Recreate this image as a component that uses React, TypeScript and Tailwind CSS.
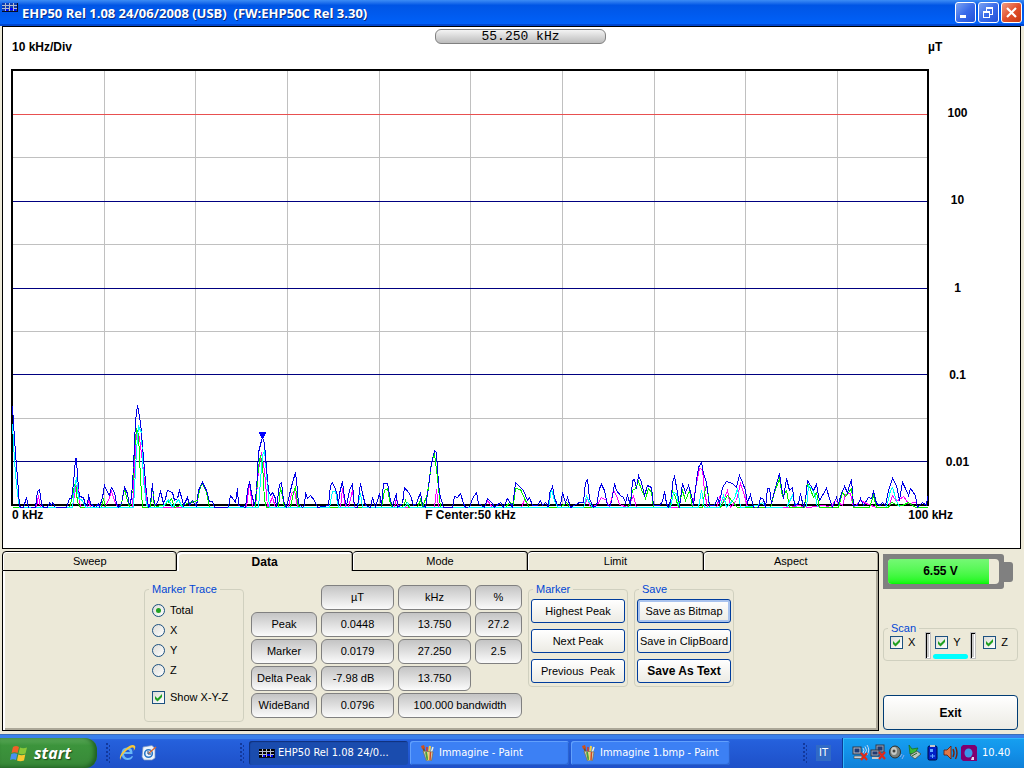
import { useState, type ReactNode } from "react";

const TOTAL =
  "12,406 13,423 15,453 17,478 19,505 20,507 23,507 26,497 28,507 35,507 37,491 39,489 41,503 43,507 47,507 49,502 51,505 52,502 55,507 66,507 69,498 71,498 73,483 75,458 76,458 77,477 79,496 83,497 85,505 87,505 88,494 90,503 95,507 98,503 99,507 102,497 104,485 107,492 109,495 111,487 114,492 116,503 118,507 121,503 124,487 127,493 129,505 131,497 133,467 135,420 137,405 140,422 143,457 146,493 148,507 150,503 152,483 153,498 155,505 157,502 160,491 163,503 165,498 167,490 172,492 174,500 177,498 179,490 182,500 183,505 187,497 189,505 192,500 196,506 198,490 202,482 206,490 209,501 212,501 214,507 228,507 230,495 233,499 235,502 237,488 238,505 245,507 247,490 249,481 251,493 254,505 256,490 258,452 261,440 262,437 264,443 266,468 268,490 270,495 272,492 275,498 276,507 279,484 281,482 283,500 286,507 290,490 292,482 295,472 296,480 298,503 302,507 304,505 305,492 307,498 310,495 314,500 317,507 328,505 330,485 332,482 335,489 337,495 338,505 339,493 342,481 344,498 346,505 349,490 352,483 354,507 357,507 360,483 362,493 365,505 370,507 372,497 375,507 379,493 381,505 383,483 387,483 390,500 392,505 396,493 397,507 402,503 404,487 408,492 410,495 413,505 416,503 420,492 422,505 425,507 428,487 431,463 434,450 436,452 437,470 439,493 443,507 452,507 454,496 457,497 460,493 463,503 465,507 469,507 472,498 476,492 478,503 484,507 487,498 492,503 494,507 500,502 503,507 507,498 510,503 512,507 515,482 520,487 523,490 527,500 529,497 532,505 537,505 540,500 542,505 545,502 548,507 549,493 552,486 554,497 557,505 560,505 562,492 565,502 567,497 570,507 579,502 583,502 585,482 587,479 589,498 593,507 596,505 599,488 601,484 604,490 607,505 610,505 613,490 614,483 616,490 620,495 623,497 625,502 627,495 630,505 632,480 634,479 636,488 638,475 641,482 644,495 647,485 651,487 653,505 659,505 662,501 664,491 666,503 668,507 671,497 672,482 674,476 677,492 679,507 682,483 685,492 688,485 691,495 693,505 696,480 698,467 701,462 703,473 706,482 709,505 714,505 717,498 719,502 722,487 726,481 732,483 736,487 739,475 742,482 745,490 747,502 750,494 753,507 758,507 760,497 763,499 765,507 767,488 769,488 771,503 775,487 779,473 781,487 783,498 786,478 789,490 792,487 794,505 798,503 800,493 803,507 805,500 807,480 810,485 813,490 816,484 819,500 822,495 826,488 829,498 832,507 836,497 838,503 841,493 844,486 847,492 849,485 851,479 853,505 857,505 860,498 863,505 868,497 871,498 873,491 876,503 880,505 882,502 885,505 888,490 892,478 896,485 899,500 902,482 905,488 908,495 910,488 915,495 917,507 922,502 926,505 927,496";

const GREEN =
  "12,507 69,507 71,500 73,490 75,481 77,502 80,507 101,507 103,498 105,507 120,507 124,489 127,500 129,507 132,490 134,450 136,428 138,434 140,478 142,507 150,507 152,486 154,507 167,503 171,498 174,507 197,500 200,486 202,483 206,492 209,507 255,507 258,466 260,455 262,463 264,500 266,507 278,507 280,487 282,495 284,507 290,507 293,492 295,486 297,503 299,507 381,507 384,490 387,488 390,504 392,507 402,507 405,500 408,507 417,507 420,499 422,507 427,493 431,462 434,453 437,478 440,507 505,507 509,502 513,504 515,488 520,489 525,500 529,507 560,507 566,502 569,507 628,507 632,490 635,488 638,481 641,489 645,498 648,488 651,492 653,507 669,507 672,490 675,497 678,507 682,490 685,500 689,490 692,507 702,507 705,487 707,487 709,507 720,507 727,495 732,501 737,507 770,507 774,492 779,478 782,496 786,490 789,507 804,507 807,482 810,489 813,497 816,492 819,507 838,507 842,492 845,496 851,488 853,507 869,507 873,495 876,507 888,507 891,502 898,505 902,505 908,502 915,507 927,507";

const MAGENTA =
  "12,507 36,507 38,495 40,507 72,507 75,488 77,484 80,507 87,507 88,499 90,507 104,507 108,500 111,491 114,500 117,507 132,507 136,430 139,437 142,462 145,490 147,507 246,507 249,483 252,507 255,507 258,470 261,452 264,470 267,507 272,497 275,507 288,507 291,493 294,490 297,507 340,507 342,488 345,507 348,507 352,490 354,507 394,507 396,497 398,507 434,507 436,489 438,507 484,507 487,500 492,507 521,507 524,499 529,507 583,507 587,498 590,507 597,504 601,497 606,500 609,507 613,490 616,495 619,504 627,507 633,496 636,507 692,507 695,488 699,468 702,469 704,491 707,507 716,507 719,497 722,503 727,490 730,507 736,500 740,483 744,495 747,507 790,507 798,505 808,507 824,505 830,507 835,500 842,505 845,494 850,493 853,507 860,500 868,504 876,507 888,507 892,495 896,501 903,496 908,503 915,502 918,507";

const CYAN =
  "12,424 14,460 16,485 19,507 72,507 74,488 76,477 78,498 82,500 85,507 133,507 136,450 138,426 141,432 143,480 146,505 150,507 162,507 168,499 172,507 178,499 182,507 258,507 260,480 262,455 264,450 267,485 269,507 329,507 332,491 335,491 338,507 357,507 360,493 362,507 404,507 407,502 410,507 548,507 551,489 554,500 557,507 583,507 586,496 589,502 592,507 670,507 673,492 676,493 679,507 698,507 701,490 704,507 719,507 723,495 726,507 734,498 737,488 740,507 757,505 762,502 766,507 782,507";

const CYAN_TAIL = [
  "786,507 792,495 796,507",
  "806,507 808,485 812,489 815,496 817,507",
  "886,507 890,490 892,487 896,500 899,507",
];

const X_GRID = [104, 195, 287, 379, 470, 562, 654, 745, 837];
const DECADES = ["100", "10", "1", "0.1", "0.01"];

function Spectrum() {
  return (
    <svg
      viewBox="11 69 918 439"
      preserveAspectRatio="none"
      className="h-[439px] w-full"
      shapeRendering="crispEdges"
      fill="none"
      role="img"
      aria-label="Spectrum"
    >
      <g stroke="#c0c0c0">
        {X_GRID.map((x) => (
          <line key={x} x1={x + 0.5} x2={x + 0.5} y1="70" y2="505" />
        ))}
        {[157, 244, 331, 418].map((y) => (
          <line key={y} x1="12" x2="928" y1={y + 0.5} y2={y + 0.5} />
        ))}
      </g>
      <line x1="12" x2="928" y1="114.5" y2="114.5" stroke="#e85050" />
      {[201, 288, 374, 461].map((y) => (
        <line key={y} x1="12" x2="928" y1={y + 0.5} y2={y + 0.5} stroke="#000080" />
      ))}
      <rect x="12" y="70" width="916" height="435" stroke="#000" strokeWidth="2" />
      <g transform="translate(0.5 0.5)">
        <polyline points={TOTAL} stroke="#0000e6" />
        <polyline points={MAGENTA} stroke="#ff00ff" />
        <polyline points={GREEN} stroke="#00f000" />
        <polyline points={CYAN} stroke="#00ffff" />
        {CYAN_TAIL.map((points) => (
          <polyline key={points} points={points} stroke="#00ffff" />
        ))}
        <polyline points={TOTAL} stroke="#0000e6" strokeDasharray="14 2" />
      </g>
      <path d="M259 432h7v2h-1v2h-1v2h-3v-2h-1v-2h-1z" fill="#0000ff" />
    </svg>
  );
}

function AppIcon({ plate }: { plate: string }) {
  return (
    <svg viewBox="0 0 16 9" className="h-[9px] w-4 shrink-0" shapeRendering="crispEdges" aria-hidden="true">
      <rect width="16" height="9" fill={plate} />
      <path d="M0 8.5h16M15.500 0v9" stroke="#060c24" />
      <path d="M0 2.5h15M0 5.5h15M3.500 0v8M7.500 0v8M11.500 0v8" stroke="#b4bccc" />
      <path d="M4 8V6h2v2zM8 7V5h3v2zM12 8V6h2v2z" fill="#0000ff" />
    </svg>
  );
}

const CHROME = "grid size-[21px] place-items-center rounded-[3px] border border-white";
const BLUE_BTN = "bg-linear-to-br from-[#7da2f0] via-[#3a6bea] to-[#2150d8]";

function TitleBar() {
  return (
    <header className="flex h-[26px] items-start bg-linear-to-b from-[#3c8cf5] via-[#0055e5] via-20% to-[#0062fb] pr-0.5 shadow-[inset_0_-2px_0_#0046cf]">
      <div className="pt-[3px] pl-0.5">
        <AppIcon plate="#0c3cb0" />
      </div>
      <h1 className="flex-1 pl-1 font-['Open_Sans','Noto_Sans',sans-serif] text-[13px] leading-[26px] font-bold whitespace-pre text-white [text-shadow:1px_1px_0_#0a2a80]">
        EHP50 Rel 1.08 24/06/2008 (USB)  (FW:EHP50C Rel 3.30)
      </h1>
      <div className="flex gap-0.5 pt-0.5">
        <button aria-label="Minimize" className={`${CHROME} ${BLUE_BTN}`}>
          <svg viewBox="0 0 19 19" className="size-[19px]" aria-hidden="true">
            <path d="M4 12h6v3H4z" fill="#fff" />
          </svg>
        </button>
        <button aria-label="Restore" className={`${CHROME} ${BLUE_BTN}`}>
          <svg viewBox="0 0 19 19" className="size-[19px]" shapeRendering="crispEdges" aria-hidden="true">
            <path d="M4.5 8.500h6v6h-6zM4 9.500h7M7.500 8V5.500h6v6H11M7 4.500h7" fill="none" stroke="#fff" />
          </svg>
        </button>
        <button
          aria-label="Close"
          className={`${CHROME} bg-linear-to-br from-[#f09a80] via-[#e2502c] to-[#c8380f]`}
        >
          <svg viewBox="0 0 19 19" className="size-[19px]" aria-hidden="true">
            <path d="M5 5l9 9M14 5l-9 9" stroke="#fff" strokeWidth="2.2" />
          </svg>
        </button>
      </div>
    </header>
  );
}

function ChartPanel() {
  return (
    <main className="mr-[3px] ml-0.5 border border-black bg-white pb-[26px] text-xs font-bold">
      <div className="grid h-[42px] grid-cols-[1fr_171px_414px] items-start pl-[9px]">
        <span className="mt-3 leading-4">10 kHz/Div</span>
        <output className="mt-0.5 h-[15px] rounded-[6px] border border-[#808080] bg-linear-to-b from-[#f4f4f4] to-[#bcbcbc] text-center font-['Liberation_Mono',monospace] text-[13px] leading-[14px] font-normal">
          55.250 kHz
        </output>
        <span className="mt-3 ml-auto w-[92px] leading-4">µT</span>
      </div>
      <div className="flex pl-2">
        <div className="min-w-0 flex-1">
          <Spectrum />
          <div className="grid grid-cols-[1fr_auto_1fr] pl-px leading-[14px]">
            <span>0 kHz</span>
            <span>F Center:50 kHz</span>
            <span className="-mr-6 text-right">100 kHz</span>
          </div>
        </div>
        <div className="flex h-[437px] w-[91px] flex-col pr-[34px]">
          {DECADES.map((d) => (
            <span key={d} className="grid flex-1 place-items-center">
              {d}
            </span>
          ))}
        </div>
      </div>
    </main>
  );
}

function Group({ title, className, children }: { title: string; className: string; children: ReactNode }) {
  return (
    <fieldset className={`rounded-[4px] border border-[#d0d0bf] ${className}`}>
      <legend className="ml-1 px-[3px] leading-3 text-[#0046d5]">{title}</legend>
      {children}
    </fieldset>
  );
}

function Check({ label }: { label: string }) {
  return (
    <label className="flex items-center gap-[5px] leading-4">
      <span className="grid size-[13px]">
        <input
          type="checkbox"
          defaultChecked
          className="peer col-start-1 row-start-1 size-[13px] appearance-none border border-[#1c5180] bg-linear-to-br from-[#dcdcd7] to-white"
        />
        <svg
          viewBox="0 0 13 13"
          className="pointer-events-none invisible col-start-1 row-start-1 size-[13px] peer-checked:visible"
          aria-hidden="true"
        >
          <path d="M3 5v3l2.500 2.500L10 6V3L5.500 7.500z" fill="#21a121" />
        </svg>
      </span>
      {label}
    </label>
  );
}

function Radio({ label, checked, onPick }: { label: string; checked: boolean; onPick: () => void }) {
  return (
    <label className="flex h-5 items-center gap-[5px]">
      <span className="grid size-[13px] place-items-center">
        <input
          type="radio"
          name="trace"
          checked={checked}
          onChange={onPick}
          className="peer col-start-1 row-start-1 size-[13px] appearance-none rounded-full border border-[#1c5180] bg-linear-to-br from-[#dcdcd7] to-white"
        />
        <span className="pointer-events-none invisible col-start-1 row-start-1 size-[5px] rounded-full bg-[#21a121] peer-checked:visible" />
      </span>
      {label}
    </label>
  );
}

const PUSH =
  "h-6 rounded-[3px] border border-[#003c9c] bg-linear-to-b from-white to-[#ecebe4] text-center whitespace-pre";
const CELL =
  "h-[25px] rounded-[6px] border border-[#808080] bg-linear-to-b from-[#c4c4c4] to-[#fbfbfb] p-0 text-center font-normal";

function DataTable() {
  return (
    <table className="mt-0.5 table-fixed border-separate border-spacing-x-1 border-spacing-y-0.5">
      <thead>
        <tr>
          <td className="w-[66px]" />
          <th className={`${CELL} w-[73px]`}>µT</th>
          <th className={`${CELL} w-[73px]`}>kHz</th>
          <th className={`${CELL} w-[47px]`}>%</th>
        </tr>
      </thead>
      <tbody>
        <tr>
          <th className={CELL}>Peak</th>
          <td className={CELL}>0.0448</td>
          <td className={CELL}>13.750</td>
          <td className={CELL}>27.2</td>
        </tr>
        <tr>
          <th className={CELL}>Marker</th>
          <td className={CELL}>0.0179</td>
          <td className={CELL}>27.250</td>
          <td className={CELL}>2.5</td>
        </tr>
        <tr>
          <th className={CELL}>Delta Peak</th>
          <td className={`${CELL} pr-2`}>-7.98 dB</td>
          <td className={CELL}>13.750</td>
        </tr>
        <tr>
          <th className={CELL}>WideBand</th>
          <td className={CELL}>0.0796</td>
          <td className={CELL} colSpan={2}>
            100.000 bandwidth
          </td>
        </tr>
      </tbody>
    </table>
  );
}

const TABS = ["Sweep", "Data", "Mode", "Limit", "Aspect"];

function ControlPanel() {
  const [tab, setTab] = useState("Data");
  const [trace, setTrace] = useState("Total");
  return (
    <section className="flex min-w-0 flex-1 flex-col">
      <div role="tablist" className="grid h-5 grid-cols-5">
        {TABS.map((t) => (
          <button
            key={t}
            role="tab"
            aria-selected={t === tab}
            onClick={() => setTab(t)}
            className={
              t === tab
                ? "rounded-t-[4px] border-t border-r border-black text-xs font-bold shadow-[inset_2px_2px_0_#fff,inset_-1px_0_0_#aca899]"
                : "rounded-t-[4px] border-t border-r border-b border-black shadow-[inset_1px_1px_0_#fff,inset_-1px_0_0_#aca899] first:border-l"
            }
          >
            {t}
          </button>
        ))}
      </div>
      <div className="flex flex-1 items-start border-r border-b border-l border-black pt-3 pl-[141px] shadow-[inset_2px_0_0_#fff,inset_-2px_-2px_0_#aca899]">
        <Group title="Marker Trace" className="h-[139px] w-[100px]">
          <div className="pt-[5px] pl-[7px]">
            {["Total", "X", "Y", "Z"].map((t) => (
              <Radio key={t} label={t} checked={trace === t} onPick={() => setTrace(t)} />
            ))}
            <div className="pt-[9px]">
              <Check label="Show X-Y-Z" />
            </div>
          </div>
        </Group>
        <div className="-mt-0.5 pr-0.5 pl-[3px]">
          <DataTable />
        </div>
        <Group title="Marker" className="w-[100px] pb-[3px]">
          <div className="flex flex-col gap-1.5 px-0.5 pt-1">
            <button className={PUSH}>Highest Peak</button>
            <button className={PUSH}>Next Peak</button>
            <button className={PUSH}>{"Previous  Peak"}</button>
          </div>
        </Group>
        <Group title="Save" className="ml-1.5 w-[100px] pb-[3px]">
          <div className="flex flex-col gap-1.5 px-0.5 pt-1">
            <button className={`${PUSH} shadow-[inset_0_0_0_2px_#a9c3ee]`}>Save as Bitmap</button>
            <button className={PUSH}>Save in ClipBoard</button>
            <button className={`${PUSH} text-xs font-bold`}>Save As Text</button>
          </div>
        </Group>
      </div>
    </section>
  );
}

function Slot() {
  return <span className="h-[27px] w-1.5 border border-[#c0c0c0] bg-[#c8c8c8] shadow-[inset_1px_1px_0_#000,inset_-1px_-1px_0_#fff]" />;
}

function SidePanel() {
  return (
    <aside className="flex w-[145px] flex-col pr-1.5 pl-1">
      <div className="mt-[3px] flex items-center">
        <div className="h-[35px] w-[121px] rounded-r-[3px] bg-[#808080] p-[5px]">
          <div className="h-[25px] overflow-hidden rounded-[4px] bg-[#ece9d8]">
            <div className="h-full w-[101px] bg-linear-to-b from-[#74f874] to-[#00f800] pl-1 text-center text-xs leading-[25px] font-bold">
              6.55 V
            </div>
          </div>
        </div>
        <div className="h-5 w-[9px] rounded-r-[3px] bg-[#808080]" />
      </div>
      <Group title="Scan" className="mt-[33px] h-[39px]">
        <div className="flex items-start pl-1.5">
          <Check label="X" />
          <span className="w-2.5" />
          <div className="-mt-0.5 flex gap-0.5">
            <Slot />
            <div className="flex w-[35px] flex-col justify-between">
              <div className="pt-0.5 pl-0.5">
                <Check label="Y" />
              </div>
              <span className="h-[5px] rounded-full bg-[#00ffff]" />
            </div>
            <Slot />
          </div>
          <span className="w-[7px]" />
          <Check label="Z" />
        </div>
      </Group>
      <button className="mt-auto mb-px h-[35px] rounded-[4px] border border-[#003c74] bg-linear-to-b from-white to-[#ecebe4] text-xs font-bold">
        Exit
      </button>
    </aside>
  );
}

function Grip() {
  return (
    <svg viewBox="0 0 6 22" className="h-[22px] w-1.5" shapeRendering="crispEdges" aria-hidden="true">
      {[1, 5, 9, 13, 17].map((y) => (
        <path key={y} d={`M1 ${y}h2v2H1zM4 ${y + 2}h1v2H4z`} fill="#12389c" />
      ))}
    </svg>
  );
}

function PaintIcon() {
  return (
    <svg viewBox="0 0 16 16" className="size-4 shrink-0" aria-hidden="true">
      <path d="M5 8L3 2" stroke="#8b4a18" strokeWidth="2" />
      <path d="M1 1l3-1 1 3-3 1z" fill="#d05018" />
      <path d="M7 8V2" stroke="#e03020" strokeWidth="1.500" />
      <path d="M9 8l1-7" stroke="#f4d040" strokeWidth="2" />
      <path d="M11 8l2-6" stroke="#f0f0e0" strokeWidth="1.500" />
      <path d="M3 6l10 1-1.500 8.500-5 .5z" fill="#d8d0b0" stroke="#786848" strokeWidth=".7" />
      <path d="M6 7l1.500 8" stroke="#48a038" strokeWidth="1.800" />
      <path d="M8.500 7v8" stroke="#f0d868" strokeWidth="1.200" />
      <path d="M10.500 7l-.5 8" stroke="#d04820" strokeWidth="1.500" />
    </svg>
  );
}

const TASK = "flex h-6 w-[159px] items-center rounded-[3px]";

function TrayIcons() {
  return (
    <svg viewBox="0 0 126 18" className="h-[18px] w-[126px] shrink-0" aria-hidden="true">
      <g>
        <rect x="1" y="3" width="8" height="7" fill="#b8bcc8" stroke="#303848" />
        <rect x="2.500" y="4.500" width="5" height="4" fill="#203a70" />
        <path d="M2 12h8v2.500H2z" fill="#d0d0d0" stroke="#404040" strokeWidth=".6" />
        <path d="M11 4q2 2 0 5M13 2.500q3 3.500 0 7.500M15 1q3.500 5 0 10" fill="none" stroke="#c8d8f0" />
        <path d="M9 9l6 7M15 9l-6 7" stroke="#e02818" strokeWidth="2.200" />
      </g>
      <g>
        <rect x="24" y="1" width="8" height="7" fill="#9aa4b8" stroke="#303848" />
        <rect x="25.500" y="2.500" width="5" height="4" fill="#203a70" />
        <rect x="19" y="6" width="8" height="6" fill="#9aa4b8" stroke="#303848" />
        <rect x="20.500" y="7.500" width="5" height="3" fill="#203a70" />
        <path d="M20 13h7v2h-7z" fill="#c8c8c8" />
        <path d="M27 8l6 7M33 8l-6 7" stroke="#e02818" strokeWidth="2.200" />
      </g>
      <g>
        <ellipse cx="43" cy="8" rx="5.500" ry="6" fill="#78807c" stroke="#303430" />
        <ellipse cx="42" cy="7" rx="3" ry="4" fill="#c4c8c4" />
        <circle cx="42" cy="7" r="1.500" fill="#404440" />
        <path d="M48 13l2-3M50 15l2-4" stroke="#88b0f0" />
      </g>
      <g>
        <path d="M57 1l3 4 6-1-3 5-5 1z" fill="#38b838" stroke="#186818" strokeWidth=".7" />
        <path d="M58 11l7-4 4 3-6 5z" fill="#c0c8c0" stroke="#384838" strokeWidth=".7" />
        <path d="M60 12l5-3" stroke="#286028" />
      </g>
      <g>
        <rect x="76" y="2" width="9" height="14" rx="1.500" fill="#0020c8" stroke="#000840" />
        <path d="M78 1h5v2h-5z" fill="#c8c8c8" />
        <rect x="78" y="5" width="3" height="3" fill="#60a8ff" />
        <path d="M78 12h5M80.500 10v4" stroke="#60a8ff" />
      </g>
      <g stroke="#601808" strokeWidth=".8">
        <path d="M92 6h3l4-4v13l-4-4h-3z" fill="#e07848" />
        <path d="M101 5q2 4 0 8M103.500 3q3 6 0 12" fill="none" stroke="#782008" strokeWidth="1.400" />
      </g>
      <g>
        <path d="M111 1h12l2 2v14h-14l-2-2V3z" fill="#800070" />
        <ellipse cx="116.500" cy="9" rx="4" ry="4.500" fill="#3a98e8" />
        <path d="M120 13h2v3h-3z" fill="#e8d8f0" />
      </g>
    </svg>
  );
}

function TaskBar() {
  return (
    <footer className="flex h-[34px] items-end bg-linear-to-b from-[#3a7be8] via-[#2560dc] via-20% to-[#1e50c8] font-['DejaVu_Sans_Condensed','DejaVu_Sans',sans-serif] text-[11px] text-white shadow-[inset_0_1px_0_#3a6eb8,inset_0_5px_0_#3a80ea]">
      <button className="flex h-[30px] w-[97px] items-center gap-1.5 rounded-r-xl bg-linear-to-b from-[#5aa858] via-[#3c943c] via-25% to-[#388838] pl-2.5 shadow-[inset_-3px_-1px_4px_#1f5f22]">
        <svg viewBox="0 0 18 17" className="h-[17px] w-[18px]" aria-hidden="true">
          <path d="M3 2q3-2 6 0L7.500 8q-3-1.500-6 0z" fill="#f06028" />
          <path d="M10 2.500q3 1.500 7 0L15.500 8.500q-3 1.500-7 0z" fill="#88c838" />
          <path d="M1.300 9q3-1.500 6 0L6 15q-3-1.500-6 0z" fill="#4890f0" />
          <path d="M8.300 9.500q3 1.500 7 0L14 15.500q-4 1.500-7 0z" fill="#f8c830" />
        </svg>
        <span className="font-['Open_Sans','Noto_Sans',sans-serif] text-base leading-5 font-bold italic [text-shadow:1px_1px_1px_#1c4a1c]">
          start
        </span>
      </button>
      <div className="flex h-[30px] items-center pl-2">
        <Grip />
        <svg viewBox="0 0 40 18" className="ml-2 h-[18px] w-10" aria-hidden="true">
          <path d="M13.500 10H5q.5 4 4 4 2.500 0 4-2l1 .5q-1.500 3.500-5.500 3.500Q2.500 16 2.500 9.500T9 3.500q5 0 4.500 6.500M5 8h6q-.5-2.500-3-2.500T5 8" fill="#68b8f8" fillRule="evenodd" />
          <path d="M1.500 16Q-1 12 6 5.500T16 2q1 2-1.500 5Q15.500 4 14 3.500 11 3 6 8T1.500 16" fill="#f8c838" />
          <path d="M24 3l9-1.500 3 3V14l-3 2h-8l-2-3z" fill="#eef4fc" stroke="#8098c0" strokeWidth=".7" />
          <circle cx="29.500" cy="9.500" r="3.800" fill="none" stroke="#2878c8" strokeWidth="1.600" />
          <path d="M30 9l7-6" stroke="#d86830" strokeWidth="1.500" />
          <path d="M29 7v3h3" fill="none" stroke="#183868" />
        </svg>
      </div>
      <div className="flex h-[30px] flex-1 items-center gap-0.5 pl-20">
        <Grip />
        <button className={`${TASK} ml-0.5 gap-[3px] bg-[#1a4cae] pl-2.5 shadow-[inset_1px_1px_1px_#10307c]`}>
          <AppIcon plate="#000000" />
          EHP50 Rel 1.08 24/0...
        </button>
        <button className={`${TASK} gap-[3px] bg-[#3c80f4] pl-2.5 shadow-[inset_1px_1px_0_#62a0fc,inset_-1px_-1px_1px_#2860cc]`}>
          <PaintIcon />
          Immagine - Paint
        </button>
        <button className={`${TASK} gap-[3px] bg-[#3c80f4] pl-2.5 shadow-[inset_1px_1px_0_#62a0fc,inset_-1px_-1px_1px_#2860cc]`}>
          <PaintIcon />
          Immagine 1.bmp - Paint
        </button>
      </div>
      <div className="flex h-[30px] items-center gap-2 pr-[11px]">
        <Grip />
        <button className="h-4 bg-[#316ac5] px-[3px] leading-4">IT</button>
      </div>
      <div className="flex h-[30px] w-[182px] items-center gap-1 border-l border-[#0c3c98] bg-linear-to-b from-[#16a0f0] via-[#1290e8] to-[#0f80d8] pl-[9px] shadow-[inset_1px_1px_0_#30b8fc]">
        <TrayIcons />
        <time>10.40</time>
      </div>
    </footer>
  );
}

export default function App() {
  return (
    <div className="flex min-h-screen flex-col bg-[#ece9d8] font-['Liberation_Sans',Arial,sans-serif] text-[11px] text-black">
      <TitleBar />
      <ChartPanel />
      <div className="flex flex-1 pt-0.5 pb-[3px] pl-0.5">
        <ControlPanel />
        <SidePanel />
      </div>
      <TaskBar />
    </div>
  );
}
